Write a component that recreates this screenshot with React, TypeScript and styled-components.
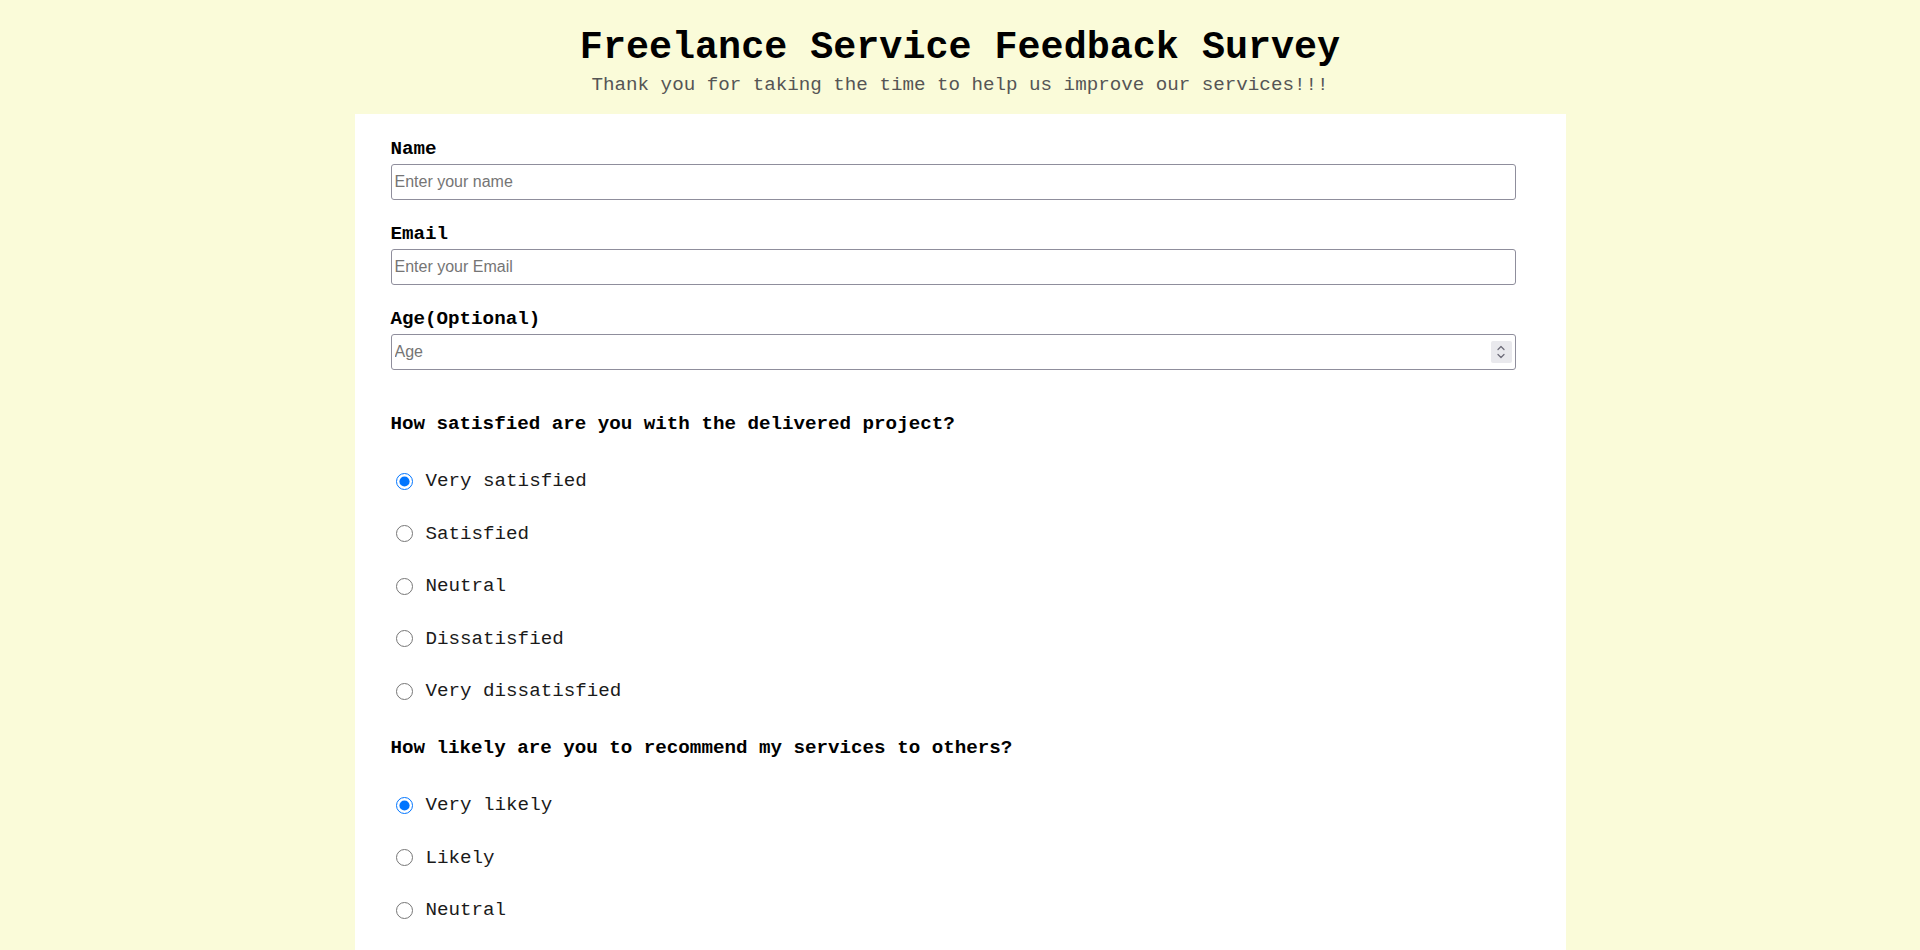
import React from 'react'
import styled, { createGlobalStyle } from 'styled-components'

const GlobalStyle = createGlobalStyle`
  html, body {
    margin: 0;
    padding: 0;
    background: #fafbd9;
    font-family: "Liberation Mono", "Courier New", monospace;
    color: #000;
  }
  * { box-sizing: border-box; }
`

const satisfaction = ['Very satisfied', 'Satisfied', 'Neutral', 'Dissatisfied', 'Very dissatisfied']
const recommend = ['Very likely', 'Likely', 'Neutral', 'Unlikely', 'Very unlikely']

export default function App() {
  return (
    <>
      <GlobalStyle />
      <Page>
        <Header>
          <Title>Freelance Service Feedback Survey</Title>
          <Subtitle>Thank you for taking the time to help us improve our services!!!</Subtitle>
        </Header>
        <Form onSubmit={e => e.preventDefault()}>
          <Fields>
            <Field>
              <Label htmlFor="name">Name</Label>
              <Input id="name" type="text" placeholder="Enter your name" />
            </Field>
            <Field>
              <Label htmlFor="email">Email</Label>
              <Input id="email" type="email" placeholder="Enter your Email" />
            </Field>
            <Field>
              <Label htmlFor="age">Age(Optional)</Label>
              <InputWrap>
                <Input id="age" type="number" placeholder="Age" />
                <Spinner aria-hidden>
                  <svg width="10" height="16" viewBox="0 0 10 16" fill="none" stroke="#6e6d7a" strokeWidth="1.3" strokeLinecap="round" strokeLinejoin="round">
                    <path d="M2 5.5 L5 2.5 L8 5.5" />
                    <path d="M2 10.5 L5 13.5 L8 10.5" />
                  </svg>
                </Spinner>
              </InputWrap>
            </Field>
          </Fields>

          <Question>How satisfied are you with the delivered project?</Question>
          <Options>
            {satisfaction.map((s, i) => (
              <Option key={s}>
                <Radio type="radio" name="satisfaction" defaultChecked={i === 0} />
                {s}
              </Option>
            ))}
          </Options>

          <Question>How likely are you to recommend my services to others?</Question>
          <Options>
            {recommend.map((s, i) => (
              <Option key={s}>
                <Radio type="radio" name="recommend" defaultChecked={i === 0} />
                {s}
              </Option>
            ))}
          </Options>
        </Form>
      </Page>
    </>
  )
}

const Page = styled.div`
  display: flex;
  flex-direction: column;
  align-items: center;
  padding-top: 25px;
`

const Header = styled.header`
  display: flex;
  flex-direction: column;
  align-items: center;
  gap: 2.5px;
  margin-bottom: 17.5px;
`

const Title = styled.h1`
  margin: 0;
  font-size: 38.4px;
  line-height: 46px;
  font-weight: 700;
  color: #000;
`

const Subtitle = styled.p`
  margin: 0;
  font-size: 19.2px;
  line-height: 23px;
  color: #555;
`

const Form = styled.form`
  width: 1211px;
  background: #fff;
  padding: 24px 50px 40px 36px;
`

const Fields = styled.div`
  display: flex;
  flex-direction: column;
  gap: 23px;
  margin-bottom: 43px;
`

const Field = styled.div`
  display: flex;
  flex-direction: column;
  gap: 3px;
`

const Label = styled.label`
  font-size: 19.2px;
  line-height: 23px;
  font-weight: 700;
`

const InputWrap = styled.div`
  position: relative;
  display: flex;
`

const Input = styled.input`
  width: 100%;
  height: 36px;
  padding: 0 3px;
  border: 1px solid #8f8e9c;
  border-radius: 3px;
  font-family: "Liberation Sans", Arial, sans-serif;
  font-size: 16px;
  color: #000;
  background: #fff;
  -moz-appearance: textfield;
  &::placeholder { color: #757575; }
  &::-webkit-inner-spin-button,
  &::-webkit-outer-spin-button {
    -webkit-appearance: none;
    margin: 0;
  }
`

const Spinner = styled.span`
  position: absolute;
  right: 4px;
  top: 7px;
  width: 21px;
  height: 22px;
  display: flex;
  align-items: center;
  justify-content: center;
  background: #e9e9ed;
  border-radius: 2px;
  pointer-events: none;
`

const Question = styled.p`
  margin: 0;
  font-size: 19.2px;
  line-height: 23px;
  font-weight: 700;
`

const Options = styled.div`
  display: flex;
  flex-direction: column;
  gap: 29.5px;
  margin: 33.5px 0 34.5px;
`

const Option = styled.label`
  display: flex;
  align-items: center;
  height: 23px;
  font-size: 19.2px;
  color: #1a1a1a;
`

const Radio = styled.input`
  width: 17px;
  height: 17px;
  margin: 0 13px 0 5px;
`
